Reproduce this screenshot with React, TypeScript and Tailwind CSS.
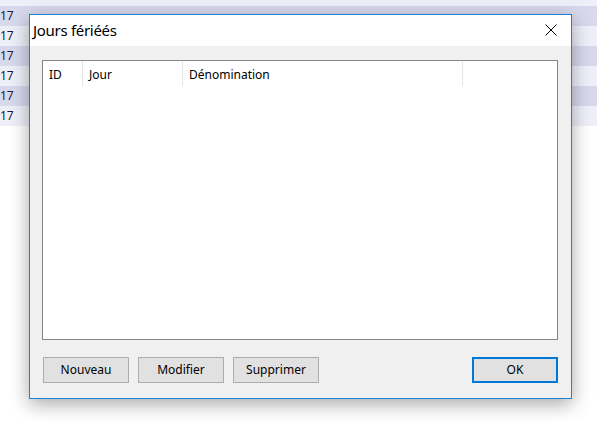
import React from 'react';

const font = { fontFamily: '"Noto Sans", "Open Sans", sans-serif' };

const ROWS = [
  { bg: 'bg-[#efeff9]' },
  { bg: 'bg-[#d9d9ed]' },
  { bg: 'bg-[#efeff9]' },
  { bg: 'bg-[#d9d9ed]' },
  { bg: 'bg-[#efeff9]' },
  { bg: 'bg-[#d9d9ed]' },
  { bg: 'bg-[#efeff9]' },
];

const COLUMNS = [
  { label: 'ID', w: 'w-[40px]' },
  { label: 'Jour', w: 'w-[100px]' },
  { label: 'Dénomination', w: 'w-[280px]' },
];

function Btn({ label, primary }: { label: string; primary?: boolean }) {
  return (
    <button
      type="button"
      className={`w-[86px] h-[26px] bg-[#e1e1e1] text-[12px] text-black flex items-center justify-center ${
        primary ? 'border-2 border-[#0078d7]' : 'border border-[#adadad]'
      }`}
    >
      {label}
    </button>
  );
}

export default function App() {
  return (
    <div className="relative w-[597px] h-[421px] bg-white overflow-hidden" style={font}>
      {/* grid behind the dialog */}
      <div className="-mt-[14px] flex flex-col">
        {ROWS.map((r, i) => (
          <div key={i} className={`h-[20px] ${r.bg} flex items-center`}>
            <span className="text-[12px] leading-none text-[#1a1a40] whitespace-nowrap">17</span>
          </div>
        ))}
      </div>

      {/* dialog */}
      <div className="absolute left-[29px] top-[14px] w-[543px] h-[385px] border border-[#1883d7] bg-[#f0f0f0] flex flex-col shadow-[0_5px_18px_rgba(0,0,0,0.35)]">
        <div className="h-[31px] bg-white flex items-center justify-between pl-[3px] pr-[14px] shrink-0">
          <span className="text-[15px] text-black tracking-[-0.3px] -mt-[1px]">Jours fériéés</span>
          <svg width="12" height="12" viewBox="0 0 12 12" className="-mt-[1px]">
            <path d="M0.5 0.5 L11.5 11.5 M11.5 0.5 L0.5 11.5" stroke="#000" strokeWidth="1" fill="none" />
          </svg>
        </div>

        <div className="flex-1 flex flex-col pt-[14px] pl-[12px] pr-[13px] pb-[15px]">
          <div className="h-[280px] border border-[#828790] bg-white">
            <div className="h-[25px] flex">
              {COLUMNS.map(c => (
                <div key={c.label} className={`${c.w} h-full border-r border-[#e5e5e5] flex items-center pl-[6px] pt-[2px] text-[12px] text-black`}>
                  {c.label}
                </div>
              ))}
            </div>
          </div>

          <div className="mt-[17px] flex items-center pl-[1px]">
            <div className="flex gap-[9px]">
              <Btn label="Nouveau" />
              <Btn label="Modifier" />
              <Btn label="Supprimer" />
            </div>
            <div className="ml-auto">
              <Btn label="OK" primary />
            </div>
          </div>
        </div>
      </div>
    </div>
  );
}
